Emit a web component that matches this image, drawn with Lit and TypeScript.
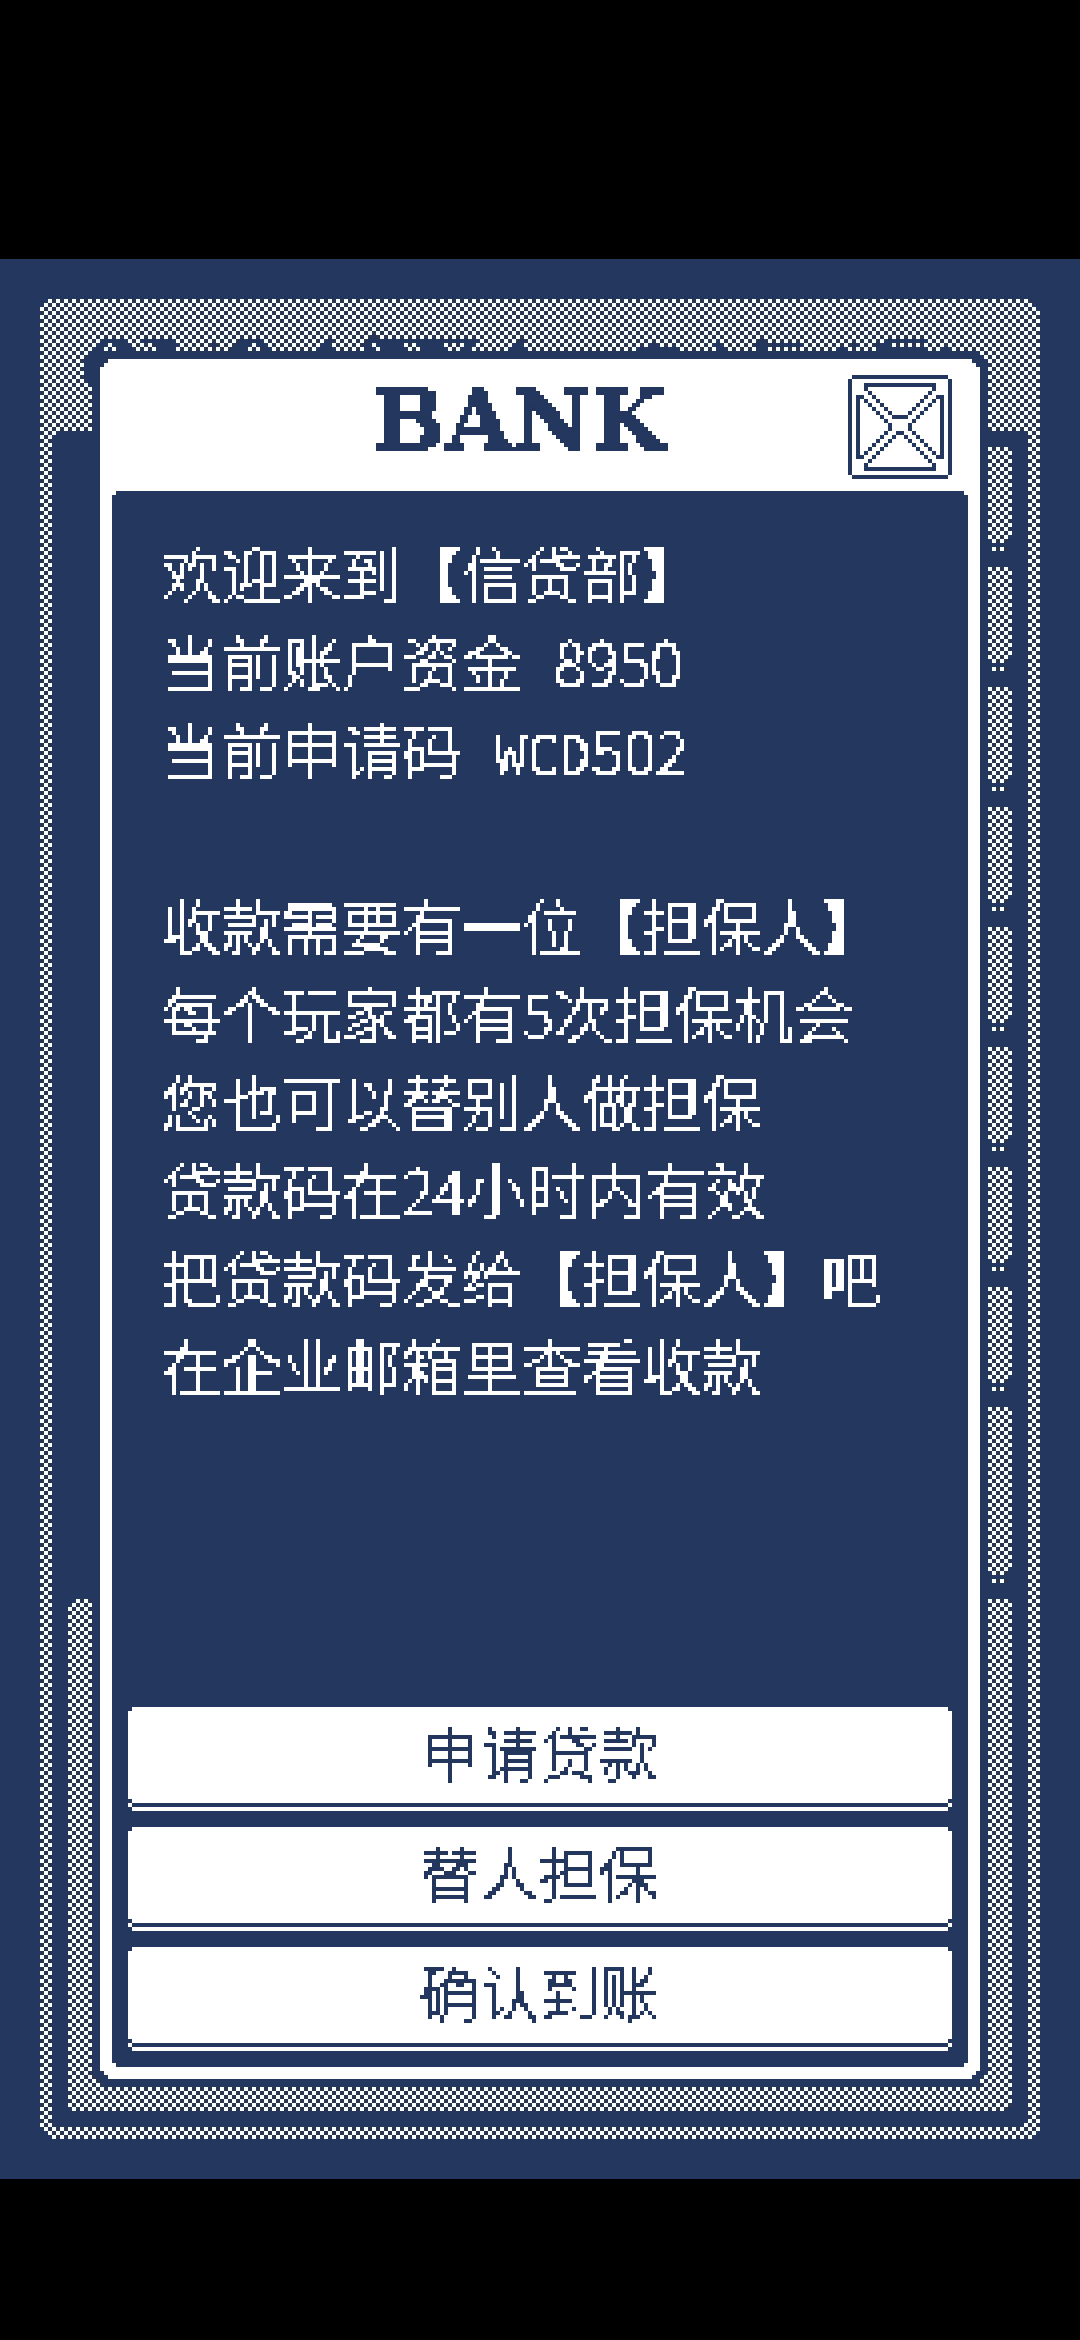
import { LitElement, html, svg, css } from "lit";
import { customElement, property } from "lit/decorators.js";

type Box = [x: number, y: number, w: number, h: number];

const boxesToPath = (boxes: Box[]) =>
  boxes.map(([x, y, w, h]) => `M${x} ${y}h${w}v${h}h${-w}z`).join("");

/* Dithered areas of the backdrop, on a 270 x 480 grid. */
const PILLS: Box[] = Array.from({ length: 8 }, (_, i) => [247, 47 + i * 30, 6, 24] as Box);

const DITHER: Box[] = [
  [10, 10, 250, 33],
  [10, 43, 3, 427],
  [13, 43, 1, 1],
  [257, 43, 3, 427],
  [10, 467, 250, 3],
  [256, 466, 1, 1],
  [17, 335, 6, 128],
  [247, 335, 6, 128],
  [17, 457, 236, 6],
  [23, 454, 1, 3],
  [24, 455, 1, 2],
  [246, 454, 1, 3],
  [245, 455, 1, 2],
  ...PILLS,
  [247, 287, 6, 42],
  ...PILLS.map(([x, y]) => [x + 1, y + 25, 4, 1] as Box),
  [248, 330, 4, 1],
];

/* Rounded-off corners and the hollow between the banner and the window. */
const CUTS: Box[] = [
  [10, 10, 2, 1],
  [10, 11, 1, 1],
  [258, 10, 2, 2],
  [259, 12, 1, 1],
  [10, 467, 1, 3],
  [11, 468, 1, 2],
  [12, 469, 1, 1],
  [259, 468, 1, 2],
  [258, 469, 1, 1],
  [17, 335, 2, 1],
  [17, 336, 1, 1],
  [17, 462, 1, 1],
  [252, 462, 1, 1],
  [22, 23, 223, 1],
  [22, 24, 224, 1],
  [21, 25, 226, 6],
  [22, 31, 225, 1],
  [23, 32, 224, 11],
  ...[...PILLS, [247, 287, 6, 42] as Box].flatMap(([x, y, , h]): Box[] => [
    [x + 5, y + h - 2, 1, 2],
    [x, y + h - 1, 1, 1],
  ]),
];

/* Dark runs per row where the hidden scenery bites into the banner. */
const FRINGE: Record<number, [from: number, to: number][]> = {
  19: [[93, 93]],
  20: [[25, 31], [35, 43], [60, 65], [81, 82], [92, 119], [130, 130], [179, 179], [190, 190], [221, 231]],
  21: [[24, 26], [28, 32], [39, 44], [53, 53], [59, 62], [64, 66], [80, 82], [91, 92], [94, 100], [104, 110], [116, 118], [128, 130], [162, 164], [178, 180], [189, 191], [193, 200], [213, 214], [219, 222]],
  22: [[23, 25], [27, 27], [29, 33], [39, 43], [58, 61], [66, 67], [79, 83], [91, 93], [95, 101], [105, 111], [115, 117], [127, 131], [159, 169], [179, 181], [189, 191], [209, 211], [219, 231], [235, 237]],
};

const FRINGE_BOXES: Box[] = Object.entries(FRINGE).flatMap(([row, runs]) =>
  runs.map(([from, to]) => [from, Number(row), to - from + 1, 1] as Box),
);

/* Close icon on a 26 x 26 grid: a double frame split by a cross. */
const steps = (x: number, y: number, dx: number, dy: number, n: number): Box[] =>
  Array.from({ length: n }, (_, i) => [x + i * dx, y + i * dy, 1, 1] as Box);

const CLOSE: Box[] = [
  [1, 0, 24, 1],
  [1, 25, 24, 1],
  [0, 1, 1, 24],
  [25, 1, 1, 24],
  [4, 2, 18, 1],
  ...steps(4, 3, 1, 1, 7),
  ...steps(21, 3, -1, 1, 7),
  [11, 10, 4, 1],
  [2, 5, 1, 16],
  [3, 5, 1, 1],
  ...steps(4, 6, 1, 1, 6),
  [10, 12, 1, 2],
  ...steps(9, 14, -1, 1, 6),
  [3, 20, 1, 1],
  [23, 5, 1, 16],
  [22, 5, 1, 1],
  ...steps(21, 6, -1, 1, 6),
  [15, 12, 1, 2],
  ...steps(16, 14, 1, 1, 6),
  [22, 20, 1, 1],
  [12, 14, 2, 1],
  ...steps(11, 15, -1, 1, 8),
  ...steps(14, 15, 1, 1, 8),
  [4, 23, 18, 1],
];

/* Samples the content once per 4px cell and fills the cell with it. */
const pixelFilter = svg`
  <filter id="pixel" x="0" y="0" width="100%" height="100%"
    primitiveUnits="userSpaceOnUse" color-interpolation-filters="sRGB">
    <feComponentTransfer in="SourceGraphic" result="solid">
      <feFuncA type="discrete" tableValues="0 0 1 1 1"></feFuncA>
    </feComponentTransfer>
    <feFlood x="2" y="2" width="1" height="1" flood-color="#000" result="dot"></feFlood>
    <feComposite in="dot" in2="dot" operator="over" x="0" y="0" width="4" height="4" result="cell"></feComposite>
    <feTile in="cell" result="grid"></feTile>
    <feComposite in="solid" in2="grid" operator="in" result="center"></feComposite>
    <feOffset in="center" dx="-1" dy="0" result="left1"></feOffset>
    <feOffset in="center" dx="-2" dy="0" result="left2"></feOffset>
    <feOffset in="center" dx="1" dy="0" result="right1"></feOffset>
    <feMerge result="row">
      <feMergeNode in="center"></feMergeNode>
      <feMergeNode in="left1"></feMergeNode>
      <feMergeNode in="left2"></feMergeNode>
      <feMergeNode in="right1"></feMergeNode>
    </feMerge>
    <feOffset in="row" dx="0" dy="-1" result="up1"></feOffset>
    <feOffset in="row" dx="0" dy="-2" result="up2"></feOffset>
    <feOffset in="row" dx="0" dy="1" result="down1"></feOffset>
    <feMerge>
      <feMergeNode in="row"></feMergeNode>
      <feMergeNode in="up1"></feMergeNode>
      <feMergeNode in="up2"></feMergeNode>
      <feMergeNode in="down1"></feMergeNode>
    </feMerge>
  </filter>`;

@customElement("bank-backdrop")
export class BankBackdrop extends LitElement {
  static styles = css`
    :host {
      display: block;
    }
    .scene {
      display: block;
      width: 100%;
      height: 100%;
    }
    .shade {
      fill: #2a364f;
    }
    .lit {
      fill: #faffff;
    }
    .cut {
      fill: #24375e;
    }
  `;

  render() {
    return html`
      <svg class="scene" viewBox="0 0 270 480" preserveAspectRatio="none" shape-rendering="crispEdges" aria-hidden="true">
        <defs>
          <pattern id="dither" width="2" height="2" patternUnits="userSpaceOnUse">
            <rect class="shade" width="2" height="2"></rect>
            <rect class="lit" width="1" height="1"></rect>
            <rect class="lit" x="1" y="1" width="1" height="1"></rect>
          </pattern>
        </defs>
        <path fill="url(#dither)" d=${boxesToPath(DITHER)}></path>
        <path class="cut" d=${boxesToPath([...CUTS, ...FRINGE_BOXES])}></path>
      </svg>
    `;
  }
}

@customElement("bank-button")
export class BankButton extends LitElement {
  @property() label = "";

  static styles = css`
    :host {
      display: block;
    }
    .filters {
      position: absolute;
      width: 0;
      height: 0;
    }
    .button {
      display: block;
      box-sizing: border-box;
      width: 100%;
      height: 104px;
      padding: 0;
      border: 0;
      color: #24375e;
      background:
        linear-gradient(#24375e, #24375e) 4px 96px / calc(100% - 8px) 4px no-repeat,
        #fff;
      clip-path: polygon(
        4px 0, calc(100% - 4px) 0, calc(100% - 4px) 4px, 100% 4px,
        100% 92px, calc(100% - 4px) 92px, calc(100% - 4px) 96px, 100% 96px,
        100% 100px, calc(100% - 4px) 100px, calc(100% - 4px) 104px,
        4px 104px, 4px 100px, 0 100px, 0 96px, 4px 96px, 4px 92px, 0 92px,
        0 4px, 4px 4px
      );
      font: 300 60px/88px "Noto Sans CJK SC", sans-serif;
      -webkit-text-stroke: 1px currentColor;
      cursor: pointer;
    }
    .label {
      display: block;
      height: 104px;
      filter: url(#pixel);
    }
  `;

  render() {
    return html`
      <svg class="filters" aria-hidden="true">${pixelFilter}</svg>
      <button class="button" type="button"><span class="label">${this.label}</span></button>
    `;
  }
}

@customElement("app-root")
export class AppRoot extends LitElement {
  @property({ type: Number }) balance = 8950;
  @property() code = "WCD502";

  static styles = css`
    :host {
      display: flex;
      flex-direction: column;
      box-sizing: border-box;
      min-height: 100vh;
      padding: 259px 0 161px;
      background: #000;
      color: #fff;
      font-family: "Noto Sans CJK SC", sans-serif;
    }
    .filters {
      position: absolute;
      width: 0;
      height: 0;
    }
    .stage {
      position: relative;
      flex: 1;
      display: flex;
      padding: 100px;
      background: #24375e;
    }
    .backdrop {
      position: absolute;
      inset: 0;
    }
    .window {
      position: relative;
      flex: 1;
      display: flex;
      flex-direction: column;
      min-width: 0;
      padding: 0 12px 12px;
      background: #fff;
      clip-path: polygon(
        8px 0, calc(100% - 8px) 0, calc(100% - 8px) 4px, calc(100% - 4px) 4px,
        calc(100% - 4px) 8px, 100% 8px, 100% calc(100% - 8px),
        calc(100% - 4px) calc(100% - 8px), calc(100% - 4px) calc(100% - 4px),
        calc(100% - 8px) calc(100% - 4px), calc(100% - 8px) 100%, 8px 100%,
        8px calc(100% - 4px), 4px calc(100% - 4px), 4px calc(100% - 8px),
        0 calc(100% - 8px), 0 8px, 4px 8px, 4px 4px, 8px 4px
      );
    }
    .header {
      display: flex;
      align-items: flex-start;
      padding: 16px 16px 12px 80px;
    }
    .title {
      flex: 1;
      margin: 0;
      color: #24375e;
      font: 700 86px/92px "DejaVu Serif", serif;
      -webkit-text-stroke: 1px #24375e;
      text-align: center;
      filter: url(#pixel);
    }
    .close {
      width: 104px;
      height: 104px;
      padding: 0;
      border: 0;
      background: none;
      cursor: pointer;
    }
    .close-icon {
      display: block;
      width: 104px;
      height: 104px;
      fill: #24375e;
    }
    .body {
      flex: 1;
      display: flex;
      flex-direction: column;
      justify-content: space-between;
      background: #24375e;
      clip-path: polygon(
        4px 0, calc(100% - 4px) 0, calc(100% - 4px) 4px, 100% 4px,
        100% calc(100% - 4px), calc(100% - 4px) calc(100% - 4px),
        calc(100% - 4px) 100%, 4px 100%, 4px calc(100% - 4px),
        0 calc(100% - 4px), 0 4px, 4px 4px
      );
    }
    .copy {
      display: flex;
      flex-direction: column;
      gap: 88px;
      padding: 38px 24px 24px 50px;
      font-size: 60px;
      font-weight: 300;
      line-height: 88px;
      -webkit-text-stroke: 1px currentColor;
      filter: url(#pixel);
    }
    .text {
      margin: 0;
    }
    .line {
      display: block;
      height: 88px;
      white-space: pre;
    }
    .bracket {
      font-weight: 900;
    }
    .mono {
      font-family: "DejaVu Sans Mono", monospace;
      font-size: 54px;
      font-weight: 400;
      -webkit-text-stroke: 0;
    }
    .actions {
      display: flex;
      flex-direction: column;
      gap: 16px;
      padding: 16px;
    }
  `;

  render() {
    /* Brackets are set heavy; Latin letters and spaces take half-width cells. */
    const styled = (text: string) =>
      text.split(/([【】]|[A-Z ]+)/).filter(Boolean).map((part) =>
        /[【】]/.test(part)
          ? html`<span class="bracket">${part}</span>`
          : /[A-Z ]/.test(part)
            ? html`<span class="mono">${part}</span>`
            : part,
      );
    const lines = (items: string[]) =>
      items.map((item) => html`<span class="line">${styled(item)}</span>`);
    const intro = ["欢迎来到【信贷部】", `当前账户资金 ${this.balance}`, `当前申请码 ${this.code}`];
    const rules = [
      "收款需要有一位【担保人】",
      "每个玩家都有5次担保机会",
      "您也可以替别人做担保",
      "贷款码在24小时内有效",
      "把贷款码发给【担保人】吧",
      "在企业邮箱里查看收款",
    ];

    return html`
      <svg class="filters" aria-hidden="true">${pixelFilter}</svg>
      <main class="stage">
        <bank-backdrop class="backdrop"></bank-backdrop>
        <section class="window" aria-labelledby="title">
          <header class="header">
            <h1 class="title" id="title">BANK</h1>
            <button class="close" type="button" aria-label="关闭">
              <svg class="close-icon" viewBox="0 0 26 26" shape-rendering="crispEdges" aria-hidden="true">
                <path d=${boxesToPath(CLOSE)}></path>
              </svg>
            </button>
          </header>
          <div class="body">
            <div class="copy">
              <p class="text">${lines(intro)}</p>
              <p class="text">${lines(rules)}</p>
            </div>
            <nav class="actions">
              ${["申请贷款", "替人担保", "确认到账"].map(
                (label) => html`<bank-button .label=${label}></bank-button>`,
              )}
            </nav>
          </div>
        </section>
      </main>
    `;
  }
}
